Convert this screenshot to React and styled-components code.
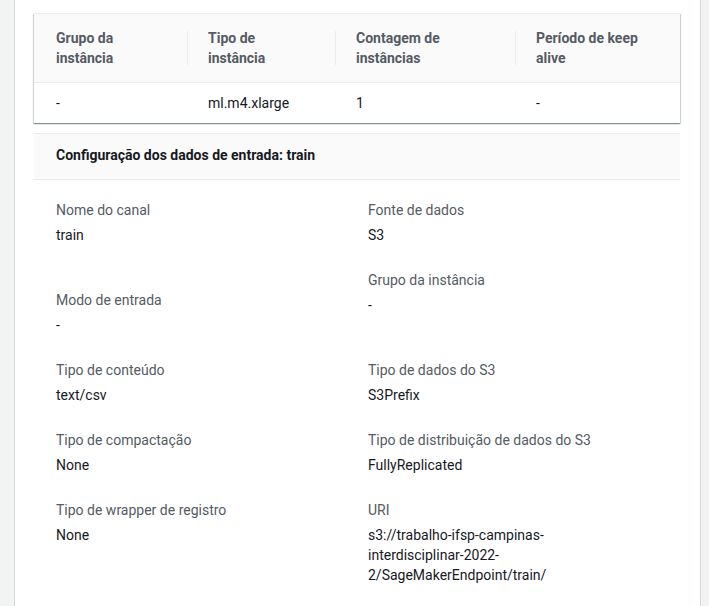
import React from "react";
import styled, { createGlobalStyle } from "styled-components";

const GlobalStyle = createGlobalStyle`
  body {
    margin: 0;
    background-color: #f2f3f3;
    font-family: Roboto, "Noto Sans", sans-serif;
    font-size: 14px;
    line-height: 20px;
    color: #16191f;
  }
`;

const Panel = styled.div`
  margin: 0 8px 0 14px;
  min-height: 100vh;
  box-sizing: border-box;
  background-color: #ffffff;
  border-left: 1px solid #d5dbdb;
  border-right: 1px solid #d5dbdb;
  padding: 13px 20px 20px 19px;
`;

const TableCard = styled.div`
  background-color: #ffffff;
  border-top: 1px solid #eaeded;
  box-shadow: 0 1px 1px 0 rgba(0, 28, 36, 0.3), 1px 1px 1px 0 rgba(0, 28, 36, 0.15),
    -1px 1px 1px 0 rgba(0, 28, 36, 0.15);
`;

const Table = styled.table`
  width: 100%;
  table-layout: fixed;
  border-collapse: collapse;
  border-spacing: 0;
`;

const HeadCell = styled.th`
  position: relative;
  text-align: left;
  vertical-align: middle;
  font-weight: 700;
  color: #545b64;
  background-color: #fafafa;
  border-bottom: 1px solid #eaeded;
  padding: 14px 20px 14px ${(p) => (p.$first ? "22px" : "21px")};

  &::before {
    content: "";
    display: ${(p) => (p.$first ? "none" : "block")};
    position: absolute;
    left: 0;
    top: 17px;
    bottom: 17px;
    border-left: 1px solid #eaeded;
  }
`;

const BodyCell = styled.td`
  padding: 10px 20px 10px ${(p) => (p.$first ? "22px" : "21px")};
  color: #16191f;
`;

const Section = styled.section`
  margin-top: 10px;
`;

const SectionHeader = styled.div`
  background-color: #fafafa;
  border-top: 1px solid #eaeded;
  border-bottom: 1px solid #eaeded;
  padding: 11px 22px 14px;
  font-weight: 700;
  color: #16191f;
`;

const Details = styled.div`
  display: grid;
  grid-template-columns: 1fr 1fr;
  column-gap: 22px;
  row-gap: 25px;
  padding: 20px 22px 0;
`;

const Pair = styled.div`
  display: flex;
  flex-direction: column;
  gap: 5px;
  padding-top: ${(p) => p.$offset || 0}px;
`;

const Label = styled.div`
  color: #545b64;
`;

const Value = styled.div`
  color: #16191f;
  overflow-wrap: anywhere;
`;

const columns = [
  { title: "Grupo da instância", width: 153, value: "-" },
  { title: "Tipo de instância", width: 148, value: "ml.m4.xlarge" },
  { title: "Contagem de instâncias", width: 180, value: "1" },
  { title: "Período de keep alive", width: 165, value: "-" },
];

const details = [
  { label: "Nome do canal", value: "train" },
  { label: "Fonte de dados", value: "S3" },
  { label: "Modo de entrada", value: "-", offset: 20 },
  { label: "Grupo da instância", value: "-" },
  { label: "Tipo de conteúdo", value: "text/csv" },
  { label: "Tipo de dados do S3", value: "S3Prefix" },
  { label: "Tipo de compactação", value: "None" },
  { label: "Tipo de distribuição de dados do S3", value: "FullyReplicated" },
  { label: "Tipo de wrapper de registro", value: "None" },
  {
    label: "URI",
    value: (
      <>
        s3://trabalho-ifsp-campinas-
        <br />
        interdisciplinar-2022-
        <br />
        2/SageMakerEndpoint/train/
      </>
    ),
  },
];

const App = () => {
  return (
    <>
      <GlobalStyle />
      <Panel>
        <TableCard>
          <Table>
            <colgroup>
              {columns.map((c) => (
                <col key={c.title} style={{ width: c.width }} />
              ))}
            </colgroup>
            <thead>
              <tr>
                {columns.map((c, i) => (
                  <HeadCell key={c.title} $first={i === 0}>
                    {c.title}
                  </HeadCell>
                ))}
              </tr>
            </thead>
            <tbody>
              <tr>
                {columns.map((c, i) => (
                  <BodyCell key={c.title} $first={i === 0}>
                    {c.value}
                  </BodyCell>
                ))}
              </tr>
            </tbody>
          </Table>
        </TableCard>
        <Section>
          <SectionHeader>Configuração dos dados de entrada: train</SectionHeader>
          <Details>
            {details.map((d) => (
              <Pair key={d.label} $offset={d.offset}>
                <Label>{d.label}</Label>
                <Value>{d.value}</Value>
              </Pair>
            ))}
          </Details>
        </Section>
      </Panel>
    </>
  );
};

export default App;
